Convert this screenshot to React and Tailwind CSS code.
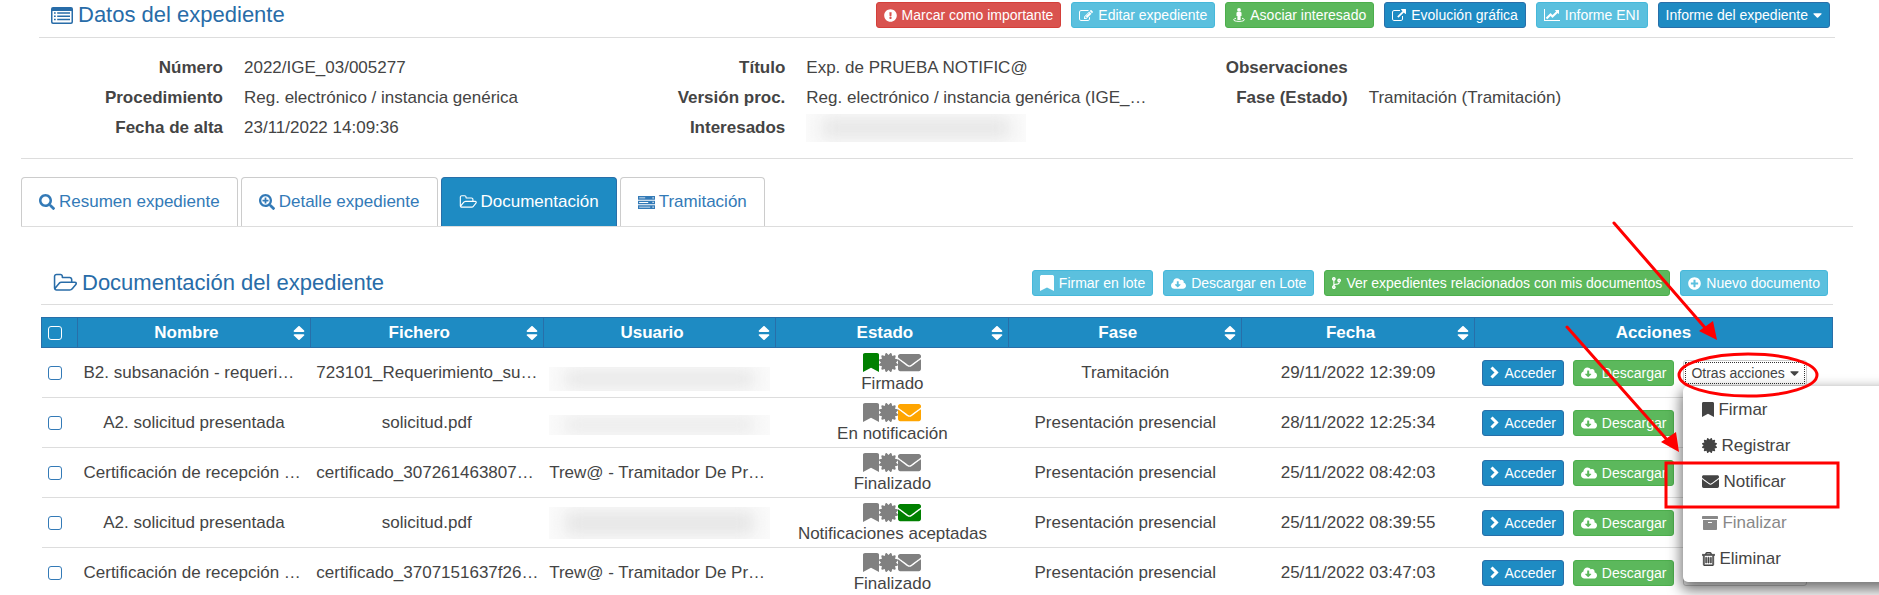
import { useState } from "react";
import {
  FaExclamationCircle,
  FaCaretDown,
  FaSearch,
  FaSearchPlus,
  FaBookmark,
  FaCertificate,
  FaEnvelope,
  FaCloudDownloadAlt,
  FaCodeBranch,
  FaPlusCircle,
  FaArchive,
  FaSort,
} from "react-icons/fa";

const FolderOpenIcon = ({ className }) => (
  <svg viewBox="0 0 1973 1792" fill="currentColor" className={className}>
    <path d="M1845 931q0-35-53-35h-1088q-40 0-85.5 21.5t-71.5 52.5l-294 363q-18 24-18 40 0 35 53 35h1088q40 0 86-22t71-53l294-363q18-22 18-39zm-1141-163h768v-160q0-40-28-68t-68-28h-576q-40 0-68-28t-28-68v-64q0-40-28-68t-68-28h-320q-40 0-68 28t-28 68v853l256-315q44-53 116-87.5t140-34.5zm1269 163q0 62-46 120l-295 363q-43 53-116 87.5t-140 34.5h-1088q-92 0-158-66t-66-158v-960q0-92 66-158t158-66h320q92 0 158 66t66 158v32h544q92 0 158 66t66 158v160h192q54 0 99 24.5t67 70.5q15 32 15 68z" />
  </svg>
);

const ExternalLinkIcon = ({ className }) => (
  <svg viewBox="0 0 1792 1664" fill="currentColor" className={className}>
    <path d="M1408 928v320q0 119-84.5 203.5t-203.5 84.5h-832q-119 0-203.5-84.5t-84.5-203.5v-832q0-119 84.5-203.5t203.5-84.5h704q14 0 23 9t9 23v64q0 14-9 23t-23 9h-704q-66 0-113 47t-47 113v832q0 66 47 113t113 47h832q66 0 113-47t47-113v-320q0-14 9-23t23-9h64q14 0 23 9t9 23zm384-864v512q0 26-19 45t-45 19-45-19l-176-176-652 652q-10 10-23 10t-23-10l-114-114q-10-10-10-23t10-23l652-652-176-176q-19-19-19-45t19-45 45-19h512q26 0 45 19t19 45z" />
  </svg>
);

const EditIcon = ({ className }) => (
  <svg viewBox="0 0 1792 1664" fill="currentColor" className={className}>
    <path d="M888 1184l116-116-152-152-116 116v56h96v96h56zm440-720q-16-16-33 1l-350 350q-17 17-1 33t33-1l350-350q17-17 1-33zm80 594v190q0 119-84.5 203.5t-203.5 84.5h-832q-119 0-203.5-84.5t-84.5-203.5v-832q0-119 84.5-203.5t203.5-84.5h832q63 0 117 25 15 7 18 23 3 17-9 29l-49 49q-14 14-32 8-23-6-45-6h-832q-66 0-113 47t-47 113v832q0 66 47 113t113 47h832q66 0 113-47t47-113v-126q0-13 9-22l64-64q15-15 35-7t20 29zm-96-738l288 288-672 672h-288v-288zm444 132l-92 92-288-288 92-92q28-28 68-28t68 28l152 152q28 28 28 68t-28 68z" />
  </svg>
);

const LineChartIcon = ({ className }) => (
  <svg viewBox="0 0 2048 1792" fill="currentColor" className={className}>
    <path d="M2048 1536v128h-2048v-1536h128v1408h1920zm-128-1248v435q0 21-19.5 29.5t-35.5-7.5l-121-121-633 633q-10 10-23 10t-23-10l-233-233-416 416-192-192 585-585q10-10 23-10t23 10l233 233 464-464-121-121q-16-16-7.5-35.5t29.5-19.5h435q14 0 23 9t9 23z" />
  </svg>
);

const TrashIcon = ({ className }) => (
  <svg viewBox="192 128 1408 1536" fill="currentColor" stroke="currentColor" strokeWidth="60" className={className}>
    <path d="M704 736v576q0 14-9 23t-23 9h-64q-14 0-23-9t-9-23v-576q0-14 9-23t23-9h64q14 0 23 9t9 23zm256 0v576q0 14-9 23t-23 9h-64q-14 0-23-9t-9-23v-576q0-14 9-23t23-9h64q14 0 23 9t9 23zm256 0v576q0 14-9 23t-23 9h-64q-14 0-23-9t-9-23v-576q0-14 9-23t23-9h64q14 0 23 9t9 23zm128 724v-948h-896v948q0 22 7 40.5t14.5 27 10.5 8.5h832q3 0 10.5-8.5t14.5-27 7-40.5zm-672-1076h448l-48-117q-7-9-17-11h-317q-10 2-17 11zm928 32v64q0 14-9 23t-23 9h-96v948q0 83-47 143.5t-113 60.5h-832q-66 0-113-58.5t-47-141.5v-952h-96q-14 0-23-9t-9-23v-64q0-14 9-23t23-9h309l70-167q15-37 54-63t79-26h320q40 0 79 26t54 63l70 167h309q14 0 23 9t9 23z" />
  </svg>
);

const ListIcon = ({ className }) => (
  <svg viewBox="0 0 22 17" fill="currentColor" className={className}>
    <path fillRule="evenodd" d="M2 0h18a2 2 0 0 1 2 2v13a2 2 0 0 1-2 2H2a2 2 0 0 1-2-2V2a2 2 0 0 1 2-2zM1.500 4v11l.5.5h18l.5-.5V4z" />
    <path d="M3 5.200h1.700v1.500H3zM3 8.500h1.700V10H3zM3 11.800h1.700v1.500H3zM6.200 5.200H19v1.500H6.200zM6.200 8.500H19V10H6.200zM6.200 11.800H19v1.500H6.200z" />
  </svg>
);

const ServerIcon = ({ className }) => (
  <svg viewBox="0 0 17 13" fill="currentColor" className={className}>
    <path d="M0 0h17v3.700H0zM0 4.650h17v3.700H0zM0 9.300h17V13H0z" />
    <path d="M1.200 1.400h6v.8h-6zM1.200 6.100h9v.8h-9zM1.200 10.800h11v.8h-11zM14.500 1.200h1.200v1.300h-1.200zM14.500 5.800h1.200v1.300h-1.200zM14.500 10.500h1.200v1.300h-1.200z" fill="#fff" />
  </svg>
);

const StreetViewIcon = ({ className }) => (
  <svg viewBox="0 0 12 14" fill="currentColor" className={className}>
    <circle cx="6" cy="1.900" r="1.900" />
    <path d="M4.500 4h3q1 0 1 1v3h-.9v4H4.400V8h-.9V5q0-1 1-1z" />
    <path d="M3 10.200C-1.200 11.500.5 13.400 6 13.400s7.200-1.900 3-3.200" fill="none" stroke="currentColor" strokeWidth="1" />
  </svg>
);

const ChevronIcon = ({ className }) => (
  <svg viewBox="0 0 9 13" fill="none" stroke="currentColor" strokeWidth="3" className={className}>
    <path d="M1.500 1.500l5 5-5 5" />
  </svg>
);

const colors = {
  red: "bg-[#d9534f] border-[#d43f3a] text-white",
  sky: "bg-[#5bc0de] border-[#46b8da] text-white",
  green: "bg-[#5cb85c] border-[#4cae4c] text-white",
  blue: "bg-[#1e8bc3] border-[#286fa9] text-white",
};

function Btn({ color, icon, children }) {
  return (
    <button
      type="button"
      className={`h-[26px] px-[7px] flex items-center gap-[5px] border rounded-[3px] text-sm whitespace-nowrap ${colors[color]}`}
    >
      {icon}
      {children}
    </button>
  );
}

// hidden personal data
function Redacted({ className }) {
  return (
    <div className={`overflow-hidden bg-[#fafafa] flex ${className}`}>
      <div className="flex-1 mx-4 my-1 bg-[#e6e6e6] blur-[8px]" />
    </div>
  );
}

const fields = [
  [
    ["Número", "2022/IGE_03/005277"],
    ["Procedimiento", "Reg. electrónico / instancia genérica"],
    ["Fecha de alta", "23/11/2022 14:09:36"],
  ],
  [
    ["Título", "Exp. de PRUEBA NOTIFIC@"],
    ["Versión proc.", "Reg. electrónico / instancia genérica (IGE_…"],
    ["Interesados", null],
  ],
  [
    ["Observaciones", ""],
    ["Fase (Estado)", "Tramitación (Tramitación)"],
  ],
];

const tabs = [
  { name: "Resumen expediente", icon: <FaSearch className="size-4" /> },
  { name: "Detalle expediente", icon: <FaSearchPlus className="size-4" /> },
  { name: "Documentación", icon: <FolderOpenIcon className="w-[18px] h-4" /> },
  { name: "Tramitación", icon: <ServerIcon className="w-[17px] h-[13px]" /> },
];

const columns = ["Nombre", "Fichero", "Usuario", "Estado", "Fase", "Fecha"];

const documents = [
  {
    name: "B2. subsanación - requeri…",
    file: "723101_Requerimiento_su…",
    redacted: "h-6 mt-3",
    status: "Firmado",
    sign: "text-[#008000]",
    phase: "Tramitación",
    date: "29/11/2022 12:39:09",
  },
  {
    name: "A2. solicitud presentada",
    file: "solicitud.pdf",
    redacted: "h-5 mt-1",
    status: "En notificación",
    mail: "text-[#ffa500]",
    phase: "Presentación presencial",
    date: "28/11/2022 12:25:34",
  },
  {
    name: "Certificación de recepción …",
    file: "certificado_307261463807…",
    user: "Trew@ - Tramitador De Pr…",
    status: "Finalizado",
    phase: "Presentación presencial",
    date: "25/11/2022 08:42:03",
  },
  {
    name: "A2. solicitud presentada",
    file: "solicitud.pdf",
    redacted: "h-8",
    status: "Notificaciones aceptadas",
    mail: "text-[#008000]",
    phase: "Presentación presencial",
    date: "25/11/2022 08:39:55",
  },
  {
    name: "Certificación de recepción …",
    file: "certificado_3707151637f26…",
    user: "Trew@ - Tramitador De Pr…",
    status: "Finalizado",
    phase: "Presentación presencial",
    date: "25/11/2022 03:47:03",
  },
];

const menuItems = [
  { name: "Firmar", icon: <FaBookmark className="w-3 h-[15px]" preserveAspectRatio="none" /> },
  { name: "Registrar", icon: <FaCertificate className="size-[15px]" /> },
  { name: "Notificar", icon: <FaEnvelope className="size-[17px]" /> },
  { name: "Finalizar", icon: <FaArchive className="size-4" />, disabled: true },
  { name: "Eliminar", icon: <TrashIcon className="w-[13px] h-[14px]" /> },
];

function Clipped({ text }) {
  return (
    <div className={`whitespace-nowrap ${text.endsWith("…") ? "text-left" : "text-center"}`}>
      {text}
    </div>
  );
}

function ActionsMenu() {
  return (
    <ul className="absolute z-10 left-0 top-full w-60 h-[196px] pt-[6px] bg-white rounded-[5px] shadow-[0_6px_14px_2px_rgba(0,0,0,0.55)] text-[17px]">
      {menuItems.map((item) => (
        <li key={item.name} className={item.disabled ? "mt-[5px]" : ""}>
          <button
            type="button"
            disabled={item.disabled}
            className="h-9 w-full pl-[19px] flex items-center gap-1 text-[#444] disabled:text-[#888]"
          >
            {item.icon}
            {item.name}
          </button>
        </li>
      ))}
    </ul>
  );
}

// red marks that point at the dropdown and at "Notificar"
function Marks() {
  return (
    <svg
      width="200"
      height="200"
      fill="none"
      stroke="#f00"
      strokeWidth="3"
      className="absolute z-20 left-0 top-0 overflow-visible pointer-events-none"
    >
      <ellipse cx="65" cy="15" rx="69" ry="21" />
      <rect x="-17" y="103" width="172" height="44" />
      <path d="M-69 -137L24 -30M-116 -33L-14 82" strokeLinecap="round" />
      <path d="M34 -20L16 -29L30 -39ZM-4 92L-22 82L-7 72Z" fill="#f00" stroke="none" />
    </svg>
  );
}

export default function App() {
  const [activeTab, setActiveTab] = useState("Documentación");
  const [selected, setSelected] = useState([]);

  const toggle = (i) => {
    setSelected(
      selected.includes(i) ? selected.filter((x) => x !== i) : [...selected, i]
    );
  };

  return (
    <div className="overflow-hidden bg-white pl-[21px] pr-[26px] pb-3 font-['Liberation_Sans',Arial,sans-serif] text-[17px] leading-6 text-[#444]">

      <header className="ml-[18px] mr-[18px] h-[38px] pt-[2px] pl-3 pr-[5px] flex items-start justify-between border-b border-[#ddd]">
        <h1 className="flex items-center gap-[5px] text-[22px] leading-[26px] text-[#286ca8]">
          <ListIcon className="w-[22px] h-[17px]" />
          Datos del expediente
        </h1>
        <div className="flex gap-[10px]">
          <Btn color="red" icon={<FaExclamationCircle className="size-[13px]" />}>Marcar como importante</Btn>
          <Btn color="sky" icon={<EditIcon className="w-[14px] h-[13px]" />}>Editar expediente</Btn>
          <Btn color="green" icon={<StreetViewIcon className="w-3 h-[14px]" />}>Asociar interesado</Btn>
          <Btn color="blue" icon={<ExternalLinkIcon className="w-[14px] h-[13px]" />}>Evolución gráfica</Btn>
          <Btn color="sky" icon={<LineChartIcon className="w-4 h-[14px]" />}>Informe ENI</Btn>
          <button type="button" className={`h-[26px] px-[7px] flex items-center gap-[5px] border rounded-[3px] text-sm ${colors.blue}`}>
            Informe del expediente
            <FaCaretDown className="w-[9px] h-[14px]" />
          </button>
        </div>
      </header>

      <section className="h-[121px] pt-[15px] pl-[18px] border-b border-[#ddd]">
        <div className="w-[93%] grid grid-cols-3">
          {fields.map((group, i) => (
            <dl key={i} className="grid grid-cols-[184px_1fr] auto-rows-[30px] content-start items-center gap-x-[21px]">
              {group.map(([label, value]) => (
                <div key={label} className="contents">
                  <dt className="font-bold text-right">{label}</dt>
                  <dd className="whitespace-nowrap">
                    {value === null ? <Redacted className="w-[220px] h-7" /> : value}
                  </dd>
                </div>
              ))}
            </dl>
          ))}
        </div>
      </section>

      <nav className="mt-[18px] flex gap-[3px] border-b border-[#ddd]">
        {tabs.map((tab) => (
          <button
            key={tab.name}
            type="button"
            onClick={() => setActiveTab(tab.name)}
            className={`h-[49px] px-[17px] flex items-center gap-1 border border-b-0 rounded-t ${
              activeTab === tab.name
                ? "bg-[#1e8bc3] border-[#286fa9] text-white"
                : "border-[#ccc] text-[#337ab7]"
            }`}
          >
            {tab.icon}
            {tab.name}
          </button>
        ))}
      </nav>

      <main className="mx-5 mt-[43px]">
        <div className="h-[35px] pl-3 pr-[5px] flex items-start justify-between border-b border-[#ddd]">
          <h2 className="flex items-center gap-[5px] text-[22px] leading-[26px] text-[#286ca8]">
            <FolderOpenIcon className="w-6 h-[22px]" />
            Documentación del expediente
          </h2>
          <div className="flex gap-[10px]">
            <Btn color="sky" icon={<FaBookmark className="w-[14px] h-4" preserveAspectRatio="none" />}>Firmar en lote</Btn>
            <Btn color="sky" icon={<FaCloudDownloadAlt className="size-[15px]" />}>Descargar en Lote</Btn>
            <Btn color="green" icon={<FaCodeBranch className="w-[9px] h-3" />}>Ver expedientes relacionados con mis documentos</Btn>
            <Btn color="sky" icon={<FaPlusCircle className="size-[13px]" />}>Nuevo documento</Btn>
          </div>
        </div>

        <table className="mt-3 w-full table-fixed">
          <thead>
            <tr className="h-[30px] bg-[#1e8bc3] border border-[#286fa9] text-white">
              <th className="w-9 pl-[6px] text-left">
                <input
                  type="checkbox"
                  aria-label="Seleccionar todos"
                  className="block size-[14px] appearance-none border border-white rounded-[3px] checked:bg-white"
                />
              </th>
              {columns.map((name) => (
                <th key={name} className="w-[13%] pr-[5px] pl-[2px] border-l border-[#286fa9]">
                  <div className="flex items-center">
                    <span className="flex-1">{name}</span>
                    <FaSort className="w-3 h-[18px]" preserveAspectRatio="none" />
                  </div>
                </th>
              ))}
              <th className="border-l border-[#286fa9]">Acciones</th>
            </tr>
          </thead>
          <tbody>
            {documents.map((doc, i) => (
              <tr key={i} className="h-[50px] border-b border-[#ddd]">
                <td className="pl-[6px]">
                  <input
                    type="checkbox"
                    aria-label={doc.name}
                    checked={selected.includes(i)}
                    onChange={() => toggle(i)}
                    className="block size-[14px] appearance-none border border-[#337ab7] rounded-[3px] checked:bg-[#337ab7]"
                  />
                </td>
                <td className="px-[6px]"><Clipped text={doc.name} /></td>
                <td className="px-[6px]"><Clipped text={doc.file} /></td>
                <td className="px-[6px]">
                  {doc.user ? <Clipped text={doc.user} /> : <Redacted className={doc.redacted} />}
                </td>
                <td>
                  <div className="h-[49px] pt-[2px] flex flex-col items-center">
                    <div className="h-6 flex items-center text-[#808080]">
                      <FaBookmark preserveAspectRatio="none" className={`w-4 h-[19px] ${doc.sign || ""}`} />
                      <FaCertificate className="size-[19px]" />
                      <FaEnvelope className={`size-[23px] ${doc.mail || ""}`} />
                    </div>
                    <span className="leading-5 whitespace-nowrap">{doc.status}</span>
                  </div>
                </td>
                <td className="px-[6px] text-center">{doc.phase}</td>
                <td className="px-[6px] text-center">{doc.date}</td>
                <td className="pl-2">
                  <div className="flex gap-[9px]">
                    <Btn color="blue" icon={<ChevronIcon className="w-[9px] h-[13px]" />}>Acceder</Btn>
                    <Btn color="green" icon={<FaCloudDownloadAlt className="size-4" />}>Descargar</Btn>
                    <div className="relative">
                      <button type="button" className="h-[26px] p-px border border-[#ccc] rounded-[3px] bg-white text-sm">
                        <span
                          className={`h-[22px] px-[5px] flex items-center gap-[5px] border whitespace-nowrap ${
                            i === 0 ? "border-dotted border-[#333]" : "border-transparent"
                          }`}
                        >
                          Otras acciones
                          <FaCaretDown className="w-[9px] h-[14px]" />
                        </span>
                      </button>
                      {i === 0 && <ActionsMenu />}
                      {i === 0 && <Marks />}
                    </div>
                  </div>
                </td>
              </tr>
            ))}
          </tbody>
        </table>
      </main>
    </div>
  );
}
